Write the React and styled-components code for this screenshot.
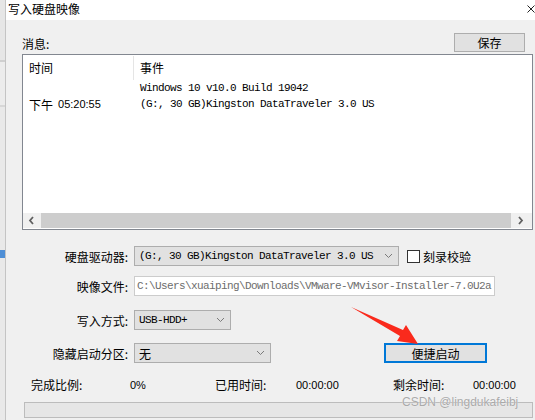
import React from "react";
import styled, { createGlobalStyle } from "styled-components";

const CJK = `"Noto Sans CJK SC", "Liberation Sans", sans-serif`;
const MONO = `"Liberation Mono", "Noto Sans CJK SC", monospace`;

const GlobalStyle = createGlobalStyle`
    html, body {
        margin: 0;
        padding: 0;
        background: #f0f0f0;
    }
    body {
        font-family: ${CJK};
        font-size: 12px;
        color: #000;
    }
`;

const logLines = [
    { period: "", clock: "", text: "Windows 10 v10.0 Build 19042" },
    { period: "下午", clock: "05:20:55", text: "(G:, 30 GB)Kingston DataTraveler 3.0 US" },
];

const Chevron = ({ dir }) => {
    const pts =
        dir === "left"
            ? "5,1 2,4.5 5,8"
            : dir === "right"
            ? "2,1 5,4.5 2,8"
            : "1,2 4.5,5.5 8,2";
    return (
        <svg width="9" height="9" viewBox="0 0 9 9">
            <polyline
                points={pts}
                fill="none"
                stroke={dir === "down" ? "#7a7a7a" : "#606060"}
                strokeWidth={dir === "down" ? 1 : 1.8}
            />
        </svg>
    );
};

export default function App() {
    return (
        <Screen>
            <GlobalStyle />
            <BackStrip />
            <Window>
                <TitleBar>
                    <Title>写入硬盘映像</Title>
                    <svg width="8" height="8" viewBox="0 0 8 8">
                        <path d="M0.5 0.5 L7.5 7.5 M7.5 0.5 L0.5 7.5" stroke="#222" strokeWidth="1" />
                    </svg>
                </TitleBar>

                <Body>
                    <TopRow>
                        <span>消息:</span>
                        <Button $width={71}>保存</Button>
                    </TopRow>

                    <LogBox>
                        <LogHeader>
                            <TimeCell>时间</TimeCell>
                            <Divider />
                            <EventCell $header>事件</EventCell>
                        </LogHeader>
                        {logLines.map((l, i) => (
                            <LogRow key={i}>
                                <TimeCell>
                                    {l.period}
                                    {l.clock && <Clock>{l.clock}</Clock>}
                                </TimeCell>
                                <EventCell>{l.text}</EventCell>
                            </LogRow>
                        ))}
                        <Spacer />
                        <HScroll>
                            <ScrollBtn $w={18}>
                                <Chevron dir="left" />
                            </ScrollBtn>
                            <Thumb />
                            <ScrollBtn $w={21}>
                                <Chevron dir="right" />
                            </ScrollBtn>
                        </HScroll>
                    </LogBox>

                    <Form>
                        <FormRow $top={16}>
                            <Label>硬盘驱动器:</Label>
                            <Select $width={265} $mono>
                                <span>(G:, 30 GB)Kingston DataTraveler 3.0 US</span>
                                <Chevron dir="down" />
                            </Select>
                            <CheckWrap>
                                <CheckBox />
                                刻录校验
                            </CheckWrap>
                        </FormRow>
                        <FormRow $top={10}>
                            <Label>映像文件:</Label>
                            <PathInput>
                                C:\Users\xuaiping\Downloads\VMware-VMvisor-Installer-7.0U2a
                            </PathInput>
                        </FormRow>
                        <FormRow $top={14}>
                            <Label>写入方式:</Label>
                            <Select $width={97} $mono>
                                <span>USB-HDD+</span>
                                <Chevron dir="down" />
                            </Select>
                        </FormRow>
                        <FormRow $top={13}>
                            <Label>隐藏启动分区:</Label>
                            <Select $width={137}>
                                <span>无</span>
                                <Chevron dir="down" />
                            </Select>
                            <PrimaryButton>便捷启动</PrimaryButton>
                        </FormRow>
                    </Form>

                    <Status>
                        <span>完成比例:</span>
                        <Value>0%</Value>
                        <span>已用时间:</span>
                        <Value>00:00:00</Value>
                        <span>剩余时间:</span>
                        <Value>00:00:00</Value>
                    </Status>

                    <Progress />
                </Body>
            </Window>

            <Arrow width="535" height="420" viewBox="0 0 535 420">
                <polygon
                    points="351,307 403,330 406,325 418,344 397,341 400,336"
                    fill="#fa2a1c"
                />
            </Arrow>
            <Watermark>CSDN @lingdukafeibj</Watermark>
        </Screen>
    );
}

const Screen = styled.div`
    position: relative;
    width: 535px;
    height: 420px;
    overflow: hidden;
    display: flex;
`;

const BackStrip = styled.div`
    width: 5px;
    flex: none;
    background: linear-gradient(
        180deg,
        #e6e6e6 0 60px,
        #cfcfcf 60px 62px,
        #ececec 62px 105px,
        #d7d7d7 105px 107px,
        #e9e9e9 107px 250px,
        #4f8fd6 250px 258px,
        #e9e9e9 258px 420px
    );
    border-right: 1px solid #c4c4c4;
`;

const Window = styled.div`
    flex: 1;
    display: flex;
    flex-direction: column;
`;

const TitleBar = styled.div`
    height: 20px;
    background: #fff;
    display: flex;
    align-items: center;
    justify-content: space-between;
    padding: 0 0 2px 2px;
    box-sizing: border-box;
`;

const Title = styled.span`
    font-size: 12px;
    line-height: 16px;
`;

const Body = styled.div`
    flex: 1;
    display: flex;
    flex-direction: column;
    padding: 13px 2px 0 16px;
`;

const TopRow = styled.div`
    display: flex;
    justify-content: space-between;
    align-items: flex-end;
    height: 19px;
    padding-right: 8px;

    span {
        line-height: 14px;
        margin-bottom: 1px;
    }
`;

const Button = styled.div`
    width: ${(p) => p.$width}px;
    height: 19px;
    box-sizing: border-box;
    background: #e1e1e1;
    border: 1px solid #adadad;
    display: flex;
    align-items: center;
    justify-content: center;
    font-size: 12px;
`;

const LogBox = styled.div`
    margin-top: 2px;
    height: 176px;
    box-sizing: border-box;
    background: #fff;
    border: 1px solid #828790;
    display: flex;
    flex-direction: column;
`;

const LogHeader = styled.div`
    height: 25px;
    display: flex;
    align-items: center;
`;

const Divider = styled.div`
    width: 1px;
    align-self: stretch;
    margin: 1px 0 0;
    background: #e5e5e5;
`;

const LogRow = styled.div`
    height: 16px;
    display: flex;
    align-items: center;
`;

const TimeCell = styled.div`
    width: 110px;
    box-sizing: border-box;
    padding-left: 6px;
    font-family: ${CJK};
    font-size: 12px;
    white-space: nowrap;
    display: flex;
    align-items: center;
`;

const Clock = styled.span`
    margin-left: 5px;
    font-family: "Liberation Sans", sans-serif;
    font-size: 11px;
`;

const EventCell = styled.div`
    padding-left: ${(p) => (p.$header ? 6 : 7)}px;
    font-family: ${(p) => (p.$header ? CJK : MONO)};
    font-size: ${(p) => (p.$header ? 12 : 11)}px;
    letter-spacing: ${(p) => (p.$header ? 0 : -0.6)}px;
    white-space: nowrap;
`;

const Spacer = styled.div`
    flex: 1;
`;

const HScroll = styled.div`
    height: 15px;
    margin-bottom: 1px;
    display: flex;
    background: #f0f0f0;
`;

const ScrollBtn = styled.div`
    width: ${(p) => p.$w}px;
    display: flex;
    align-items: center;
    justify-content: center;
`;

const Thumb = styled.div`
    flex: 1;
    background: #cdcdcd;
`;

const Form = styled.div`
    display: flex;
    flex-direction: column;
`;

const FormRow = styled.div`
    margin-top: ${(p) => p.$top}px;
    height: 20px;
    display: flex;
    align-items: center;
`;

const Label = styled.div`
    width: 112px;
    box-sizing: border-box;
    padding-right: 6px;
    text-align: right;
    font-size: 12px;
    white-space: nowrap;
`;

const Select = styled.div`
    width: ${(p) => p.$width}px;
    height: 20px;
    box-sizing: border-box;
    background: #e1e1e1;
    border: 1px solid #adadad;
    display: flex;
    align-items: center;
    justify-content: space-between;
    padding: 0 5px 0 4px;
    white-space: nowrap;
    overflow: hidden;

    span {
        font-family: ${(p) => (p.$mono ? MONO : CJK)};
        font-size: ${(p) => (p.$mono ? 11 : 12)}px;
        letter-spacing: ${(p) => (p.$mono ? -0.6 : 0)}px;
    }
`;

const CheckWrap = styled.label`
    margin-left: 8px;
    display: flex;
    align-items: center;
    gap: 3px;
    font-size: 12px;
`;

const CheckBox = styled.span`
    width: 13px;
    height: 13px;
    box-sizing: border-box;
    background: #fff;
    border: 1px solid #333;
`;

const PathInput = styled.div`
    width: 361px;
    height: 20px;
    box-sizing: border-box;
    background: #fff;
    border: 1px solid #cccccc;
    padding: 0 2px;
    display: flex;
    align-items: center;
    overflow: hidden;
    white-space: nowrap;
    color: #6d6d6d;
    font-family: ${MONO};
    font-size: 11px;
    letter-spacing: -0.6px;
`;

const PrimaryButton = styled.div`
    margin-left: 113px;
    width: 103px;
    height: 20px;
    box-sizing: border-box;
    background: #e1e1e1;
    border: 2px solid #0078d7;
    display: flex;
    align-items: center;
    justify-content: center;
    font-size: 12px;
`;

const Status = styled.div`
    margin-top: 13px;
    height: 16px;
    display: grid;
    grid-template-columns: 99px 85px 81px 97px 80px auto;
    align-items: center;
    padding-left: 9px;
    font-size: 12px;
    white-space: nowrap;
`;

const Value = styled.span`
    font-family: "Liberation Sans", sans-serif;
    font-size: 11px;
`;

const Progress = styled.div`
    margin: 10px 0 0 2px;
    height: 16px;
    box-sizing: border-box;
    background: #e6e6e6;
    border: 1px solid #bcbcbc;
`;

const Arrow = styled.svg`
    position: absolute;
    left: 0;
    top: 0;
    pointer-events: none;
`;

const Watermark = styled.div`
    position: absolute;
    left: 402px;
    top: 395px;
    font-family: "Liberation Sans", sans-serif;
    font-size: 12px;
    color: #a9a9a9;
    text-shadow: 0 0 1px #fff;
    white-space: nowrap;
`;
